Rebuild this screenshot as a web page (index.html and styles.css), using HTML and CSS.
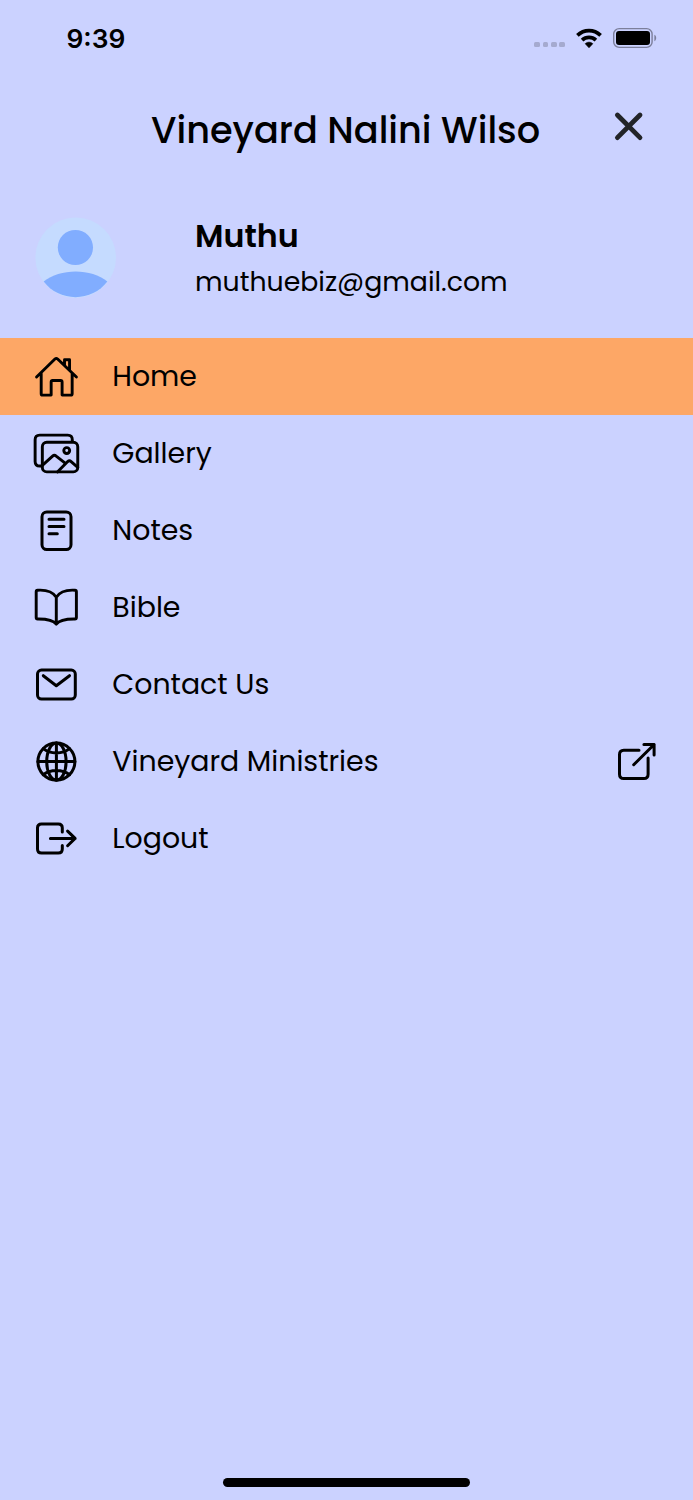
FILE: index.html
```html
<!DOCTYPE html>
<html lang="en">
<head>
<meta charset="utf-8">
<title>Vineyard Nalini Wilso</title>
<link rel="stylesheet" href="styles.css">
</head>
<body>
<div class="screen">
  <header class="status">
    <span class="time">9:39</span>
    <div class="signals">
      <div class="dots"><i></i><i></i><i></i><i></i></div>
      <svg class="wifi" width="28" height="22" viewBox="0 0 28 22">
        <path d="M2.4 8.4C9 1.9 19 1.9 25.6 8.4M7.1 13.2C11 9.5 17 9.5 20.9 13.2" fill="none" stroke="#000" stroke-width="3.7"/>
        <path d="M14 20.8l-3.8-4.1c2.1-2 5.5-2 7.6 0z" stroke="#000" stroke-width=".6" stroke-linejoin="round"/>
      </svg>
      <svg class="battery" width="46" height="22" viewBox="0 0 46 22">
        <rect x="1.7" y="1.6" width="38.4" height="18.8" rx="5.5" fill="none" stroke="#7c7f9b" stroke-width="1.4"/>
        <rect x="4" y="4" width="34" height="14" rx="3"/>
        <path d="M42.4 7.8c2.4 1 2.4 5.4 0 6.4z" fill="#7c7f9b"/>
      </svg>
    </div>
  </header>
  <div class="titlebar">
    <h1 class="title">Vineyard Nalini Wilso</h1>
    <svg class="close" width="32" height="32" viewBox="0 0 32 32"><path d="M4.4 5l22.6 22.6M27 5L4.4 27.6"/></svg>
  </div>
  <section class="profile">
    <svg class="avatar" width="82" height="82" viewBox="0 0 82 82">
      <circle cx="40.7" cy="40.7" r="40.3" fill="#c5dbff"/>
      <circle cx="40.4" cy="30.5" r="17.6" fill="#81adff"/>
      <path d="M8.7 64.6C24.7 51 56.7 51 72.3 64.6A40.3 40.3 0 0 1 8.7 64.6z" fill="#81adff"/>
    </svg>
    <div class="person">
      <div class="name">Muthu</div>
      <div class="email">muthuebiz@gmail.com</div>
    </div>
  </section>
  <nav class="menu">
    <a class="item active">
      <svg class="icon" viewBox="-.8 -.8 49.6 50.6"><path d="M3.9 25L22.9 6.4q1.4-1.2 2.8 0L45.1 25M8.7 21v21.2q0 1.5 1.5 1.5H19V30.2q0-1.5 1.5-1.5h8.3q1.5 0 1.5 1.5v13.5h8.9q1.5 0 1.5-1.5V21M32.8 12.5V7.2H38v10.3"/></svg>
      <span class="label">Home</span>
    </a>
    <a class="item">
      <svg class="icon" viewBox="-.6 -.6 49.2 50.2"><path d="M8.7 37.3H7.3q-4.7 0-4.7-4.7V10.4q0-4.7 4.7-4.7H36q4.7 0 4.7 4.7V12"/><rect x="10" y="13" width="36.3" height="30.3" rx="4.5"/><circle cx="35" cy="21.5" r="3"/><path d="M10 36.7l10.5-9.5q1.8-1.6 3.7 0l9.5 7.5M25.7 43.3L36 32.8q1.7-1.6 3.5 0l6.8 5.9"/></svg>
      <span class="label">Gallery</span>
    </a>
    <a class="item">
      <svg class="icon" viewBox="0 0 48 49"><rect x="10" y="5.9" width="29" height="37.6" rx="4.8"/><path d="M17 13.2h15M17 20.5h15M17 27.7h8.3"/></svg>
      <span class="label">Notes</span>
    </a>
    <a class="item">
      <svg class="icon" viewBox="-.6 -.6 49.2 50.2"><path d="M24.3 14C21 8.8 13.5 6.3 5.2 6.8Q3.7 6.9 3.7 8.4V34.8q0 1.5 1.5 1.5c8-.1 15.6.6 19.1 5.2 3.5-4.6 11.1-5.3 19.1-5.2q1.5 0 1.5-1.5V8.4q0-1.5-1.5-1.6C35.2 6.3 27.6 8.8 24.3 14v27.5"/></svg>
      <span class="label">Bible</span>
    </a>
    <a class="item">
      <svg class="icon" viewBox="0 0 48 49"><rect x="5.5" y="10.1" width="37.8" height="29" rx="4"/><path d="M11.3 15.7l13 10 13.2-10"/></svg>
      <span class="label">Contact Us</span>
    </a>
    <a class="item">
      <svg class="icon" viewBox="0 0 48 49"><circle cx="24.4" cy="24.6" r="18.5"/><ellipse cx="24.4" cy="24.6" rx="9.7" ry="18.5"/><path d="M24.4 6v37.2M5.9 24.6h37M11.3 11.7c7 5.6 19.2 5.6 26.2 0M11.3 37.7c7-5.6 19.2-5.6 26.2 0"/></svg>
      <span class="label">Vineyard Ministries</span>
      <svg class="icon external" viewBox="0 0 48 49"><path d="M25 13.2H9.8q-4.3 0-4.3 4.3v19.7q0 4.3 4.3 4.3h20q4.3 0 4.3-4.3V20.9M19.7 27.7L40.1 7.5M29.9 7.5h10.2v10.5"/></svg>
    </a>
    <a class="item">
      <svg class="icon" viewBox="0 0 48 49"><path d="M30.3 18v-4.1q0-4-4-4H9.5q-4 0-4 4V35q0 4 4 4h16.8q4 0 4-4v-3.6M18.4 24.4h24.7M35.6 17.1l7.5 7.3-7.5 7.3"/></svg>
      <span class="label">Logout</span>
    </a>
  </nav>
  <div class="home-indicator"></div>
</div>
</body>
</html>
```

FILE: styles.css
```css
* { box-sizing: border-box; }
body { margin: 0; background: #cbd2ff; color: #000; font-family: Poppins, Inter, "Liberation Sans", sans-serif; }
.screen { width: 693px; height: 1500px; display: flex; flex-direction: column; background: #cbd2ff; white-space: nowrap; }
.status { height: 76px; padding: 0 35px 0 66.5px; display: flex; align-items: center; justify-content: space-between; }
.time { padding-top: 1px; font: 600 26.3px/32px Inter, sans-serif; }
.signals { display: flex; align-items: center; }
.dots { display: flex; gap: 2.7px; margin: 13px 10px 0 0; }
.dots i { width: 5.7px; height: 5.7px; border-radius: 1.5px; background: #a5aacf; }
.wifi { margin-right: 9px; }
.titlebar { height: 106px; padding: 34px 48px 0 151px; display: flex; justify-content: space-between; align-items: flex-start; }
.title { margin: -1px 0 0; font-size: 36.7px; line-height: 42px; font-weight: 500; }
.close { fill: none; stroke: #222428; stroke-width: 4.8; stroke-linecap: round; }
.profile { height: 156px; padding: 35px 0 0 35px; display: flex; gap: 78px; }
.name { font-size: 31.7px; line-height: 38px; font-weight: 600; }
.email { font-size: 26.75px; line-height: 40px; margin-top: 7px; }
.item { height: 77px; padding: 0 31px 0 32px; display: flex; align-items: center; }
.active { background: #fda766; }
.icon { width: 48px; height: 49px; fill: none; stroke: #000; stroke-width: 3; stroke-linecap: round; stroke-linejoin: round; }
.label { margin-left: 32.3px; padding-bottom: 2px; font-size: 28.4px; line-height: 40px; }
.external { margin-left: auto; }
.home-indicator { width: 247px; height: 8.5px; margin: auto auto 13.5px 223px; border-radius: 5px; background: #000; }
```
